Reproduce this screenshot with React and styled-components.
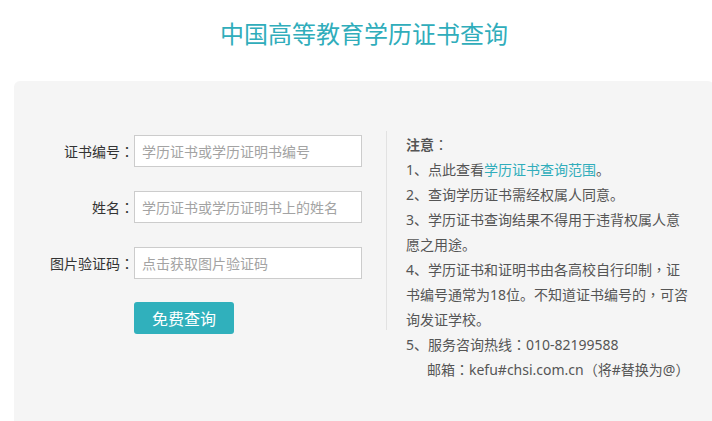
import React from 'react'
import styled, { createGlobalStyle } from 'styled-components'

const GlobalStyle = createGlobalStyle`
  body {
    margin: 0;
    background: #fff;
    font-family: "Noto Sans", "Noto Sans CJK SC", sans-serif;
  }
`

function App() {
  return (
    <Page>
      <GlobalStyle />
      <Title>中国高等教育学历证书查询</Title>
      <Panel>
        <Form>
          <Row>
            <Label>证书编号<Colon>：</Colon></Label>
            <Input placeholder="学历证书或学历证明书编号" />
          </Row>
          <Row>
            <Label>姓名<Colon>：</Colon></Label>
            <Input placeholder="学历证书或学历证明书上的姓名" />
          </Row>
          <Row>
            <Label>图片验证码<Colon>：</Colon></Label>
            <Input placeholder="点击获取图片验证码" />
          </Row>
          <Row>
            <Label />
            <Button>免费查询</Button>
          </Row>
        </Form>
        <Divider />
        <Notes>
          <NoteTitle>注意<Colon>：</Colon></NoteTitle>
          <p>1、点此查看<Link>学历证书查询范围</Link>。</p>
          <p>2、查询学历证书需经权属人同意。</p>
          <p>3、学历证书查询结果不得用于违背权属人意愿之用途。</p>
          <p>4、学历证书和证明书由各高校自行印制<Colon>，</Colon>证书编号通常为18位。不知道证书编号的<Colon>，</Colon>可咨询发证学校。</p>
          <p>5、服务咨询热线<Colon>：</Colon>010-82199588</p>
          <Indent>邮箱<Colon>：</Colon>kefu#chsi.com.cn<Colon>（</Colon>将#替换为@<Colon>）</Colon></Indent>
        </Notes>
      </Panel>
    </Page>
  )
}

export default App

const Page = styled.div`
  width: 700px;
  margin-left: 14px;
`

const Title = styled.h1`
  margin: 0;
  padding-top: 18px;
  height: 81px;
  box-sizing: border-box;
  text-align: center;
  font-family: "Noto Sans CJK SC", sans-serif;
  font-weight: 400;
  font-size: 24px;
  line-height: 30px;
  color: #30adbb;
`

const Panel = styled.div`
  display: flex;
  align-items: flex-start;
  background: #f5f5f5;
  border-radius: 6px 6px 0 0;
  padding-top: 50px;
  height: 340px;
  box-sizing: border-box;
`

const Form = styled.div`
  width: 372px;
  padding-top: 4px;
  display: flex;
  flex-direction: column;
  gap: 24px;
`

const Row = styled.div`
  display: flex;
  align-items: center;
`

const Label = styled.label`
  width: 120px;
  text-align: right;
  font-family: "Noto Sans CJK SC", sans-serif;
  font-size: 14px;
  color: #333;
`

/* centred full-width punctuation, as in the original page font */
const Colon = styled.span`
  font-family: "Noto Sans CJK TC", "Noto Sans CJK SC", sans-serif;
  font-weight: 400;
`

const Input = styled.input`
  width: 228px;
  height: 32px;
  box-sizing: border-box;
  border: 1px solid #cccccc;
  background: #fff;
  padding: 0 7px;
  font-family: "Noto Sans CJK SC", sans-serif;
  font-size: 14px;
  color: #333;
  outline: none;

  &::placeholder {
    color: #a3a3a3;
  }
`

const Button = styled.button`
  width: 100px;
  height: 32px;
  margin-top: -1px;
  border: none;
  border-radius: 3px;
  background: #30b0bc;
  color: #fff;
  font-family: "Noto Sans CJK SC", sans-serif;
  font-size: 16px;
  padding: 0;
`

const Divider = styled.div`
  width: 1px;
  height: 199px;
  background: #e2e2e2;
`

const Notes = styled.div`
  width: 282px;
  padding-left: 19px;
  padding-top: 1px;
  font-family: "Noto Sans", "Noto Sans CJK SC", sans-serif;
  font-size: 14px;
  line-height: 25px;
  color: #555;

  p {
    margin: 0;
  }
`

const NoteTitle = styled.p`
  font-weight: 700;
`

const Link = styled.a`
  color: #30adbb;
  text-decoration: none;
`

const Indent = styled.p`
  padding-left: 21px;
  white-space: nowrap;
`
